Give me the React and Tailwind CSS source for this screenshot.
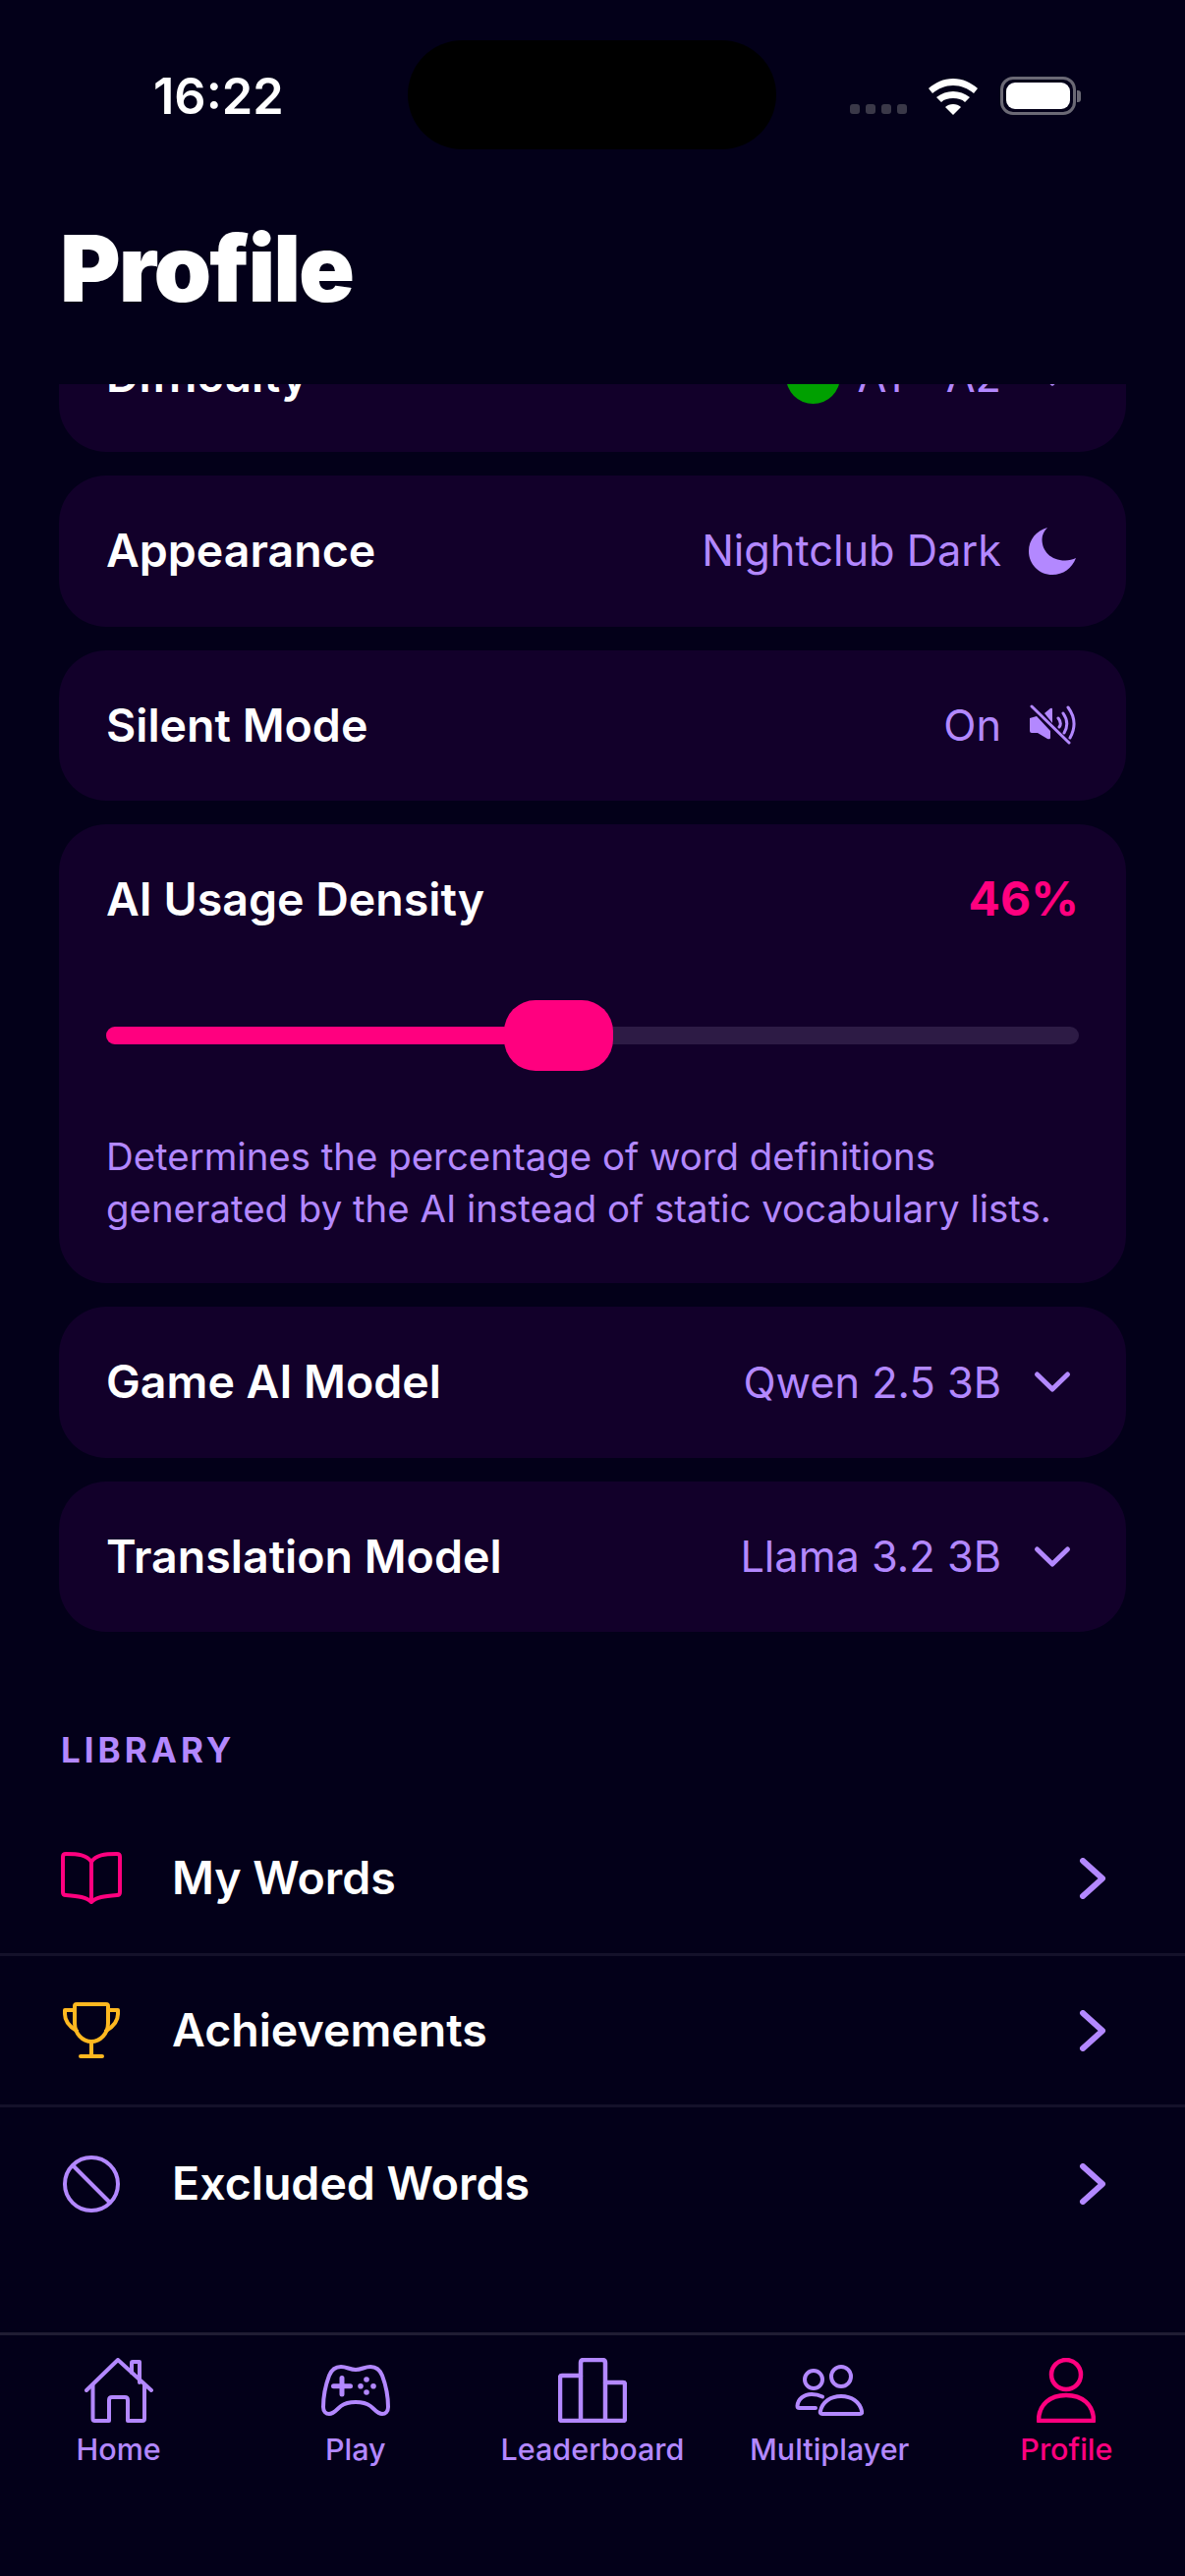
import React from "react";

const sans = "font-['Inter','Noto_Sans',sans-serif]";

const Moon = () => (
  <svg width="48" height="48" viewBox="0 0 48 48" fill="#b388ff">
    <path d="M19 0C7.5 3 0 12.5 0 24c0 13.500 10.500 24 24 24 11 0 20-6.500 24-17-3 1.500-7 2.500-11 2.500C22.500 33.500 13.500 24 13.500 12c0-4.500 2-8.500 5.500-12z" />
  </svg>
);

const SpeakerSlash = () => (
  <svg width="48" height="42" viewBox="0 0 48 42" fill="none" stroke="#b388ff" strokeLinecap="round">
    <path d="M1 14l7-2 14 15v7q0 2-3 1L9 29H3q-2 0-2-2z" fill="#b388ff" stroke="none" />
    <path d="M16 9l6-5q2-1 2 1v14z" fill="#b388ff" stroke="none" />
    <path d="M3 2l38 37" strokeWidth="3" />
    <path d="M30 14q4 5 1 9M35 9q7 10 1 20M40 3q11 15 2 31" strokeWidth="3" />
  </svg>
);

const ChevronDown = () => (
  <svg width="48" height="24" viewBox="0 0 48 24" fill="none" stroke="#b388ff" strokeWidth="5" strokeLinecap="round" strokeLinejoin="round">
    <path d="M8.500 4L24 19 39.500 4" />
  </svg>
);

const ChevronRight = () => (
  <svg width="28" height="42" viewBox="0 0 28 42" fill="none" stroke="#b388ff" strokeWidth="6" strokeLinecap="round" strokeLinejoin="round">
    <path d="M4 3l20 18L4 39" />
  </svg>
);

const BookIcon = () => (
  <svg width="62" height="54" viewBox="0 0 62 54" fill="none" stroke="#ff007f" strokeWidth="4" strokeLinejoin="round">
    <path d="M31 51C26 46 18 45 5 44q-3 0-3-3V5q0-3 3-3c13 0 21 1 26 8 5-7 13-8 26-8q3 0 3 3v36q0 3-3 3c-13 1-21 2-26 7zM31 10v41" />
  </svg>
);

const TrophyIcon = () => (
  <svg width="58" height="58" viewBox="0 0 58 58" fill="none" stroke="#ffb820" strokeWidth="4" strokeLinecap="round" strokeLinejoin="round">
    <path d="M14 2h30q2 0 2 2v17c0 11-8 19-17 19s-17-8-17-19V4q0-2 2-2z" />
    <path d="M12 8H2v4c0 8 5 13 12 17M46 8h10v4c0 8-5 13-12 17M29 40v15M18 55h22" />
  </svg>
);

const BanIcon = () => (
  <svg width="58" height="58" viewBox="0 0 58 58" fill="none" stroke="#b388ff" strokeWidth="4">
    <circle cx="29" cy="29" r="27" />
    <path d="M10 10l38 38" />
  </svg>
);

const HomeIcon = () => (
  <svg width="70" height="66" viewBox="0 0 70 66" fill="none" stroke="#b388ff" strokeWidth="4" strokeLinecap="round" strokeLinejoin="round">
    <path d="M2 33L34 2l34 31" />
    <path d="M8.500 28v34q0 2 2 2H25V43q0-3 3-3h13q3 0 3 3v21h15q2 0 2-2V28" />
    <path d="M48 15V5q0-1 1-1h7v21" />
  </svg>
);

const GameIcon = () => (
  <svg width="70" height="52" viewBox="0 0 70 52" fill="none" stroke="#b388ff" strokeWidth="4" strokeLinecap="round" strokeLinejoin="round">
    <path d="M20 2c6 0 9 3 15 3s9-3 15-3c7 0 10 4 12 9 3 8 6 22 6 32 0 5-3 7-6 7-5 0-8-5-12-8-4-3-9-4-15-4s-11 1-15 4c-4 3-7 8-12 8-3 0-6-2-6-7 0-10 3-24 6-32C10 6 13 2 20 2z" />
    <path d="M21 13.500v16.500M12.500 21.700h17" strokeWidth="5" />
    <circle cx="46" cy="15" r="2.800" fill="#b388ff" stroke="none" />
    <circle cx="46" cy="28" r="2.800" fill="#b388ff" stroke="none" />
    <circle cx="40" cy="21.700" r="2.800" fill="#b388ff" stroke="none" />
    <circle cx="53" cy="21.700" r="2.800" fill="#b388ff" stroke="none" />
  </svg>
);

const BoardIcon = () => (
  <svg width="70" height="66" viewBox="0 0 70 66" fill="none" stroke="#b388ff" strokeWidth="4.500" strokeLinejoin="round">
    <path d="M2 62V20q0-2 2-2h19V5q0-3 3-3h19q3 0 3 3v20h18q2 0 2 2v35q0 2-2 2H4q-2 0-2-2z" />
    <path d="M23 18v46M48 25v39" />
  </svg>
);

const PeopleIcon = () => (
  <svg width="70" height="52" viewBox="0 0 70 52" fill="none" stroke="#b388ff" strokeWidth="4" strokeLinecap="round" strokeLinejoin="round">
    <circle cx="19" cy="15" r="9" />
    <circle cx="47" cy="12" r="10" />
    <path d="M28 32.500C25 31 21 30 17 30 9 30 3 35 2.500 42q0 2 2 2H21" />
    <path d="M28 50q-3 0-2-3c2-9 10-15 21-15s19 6 21 15q1 3-2 3z" />
  </svg>
);

const PersonIcon = () => (
  <svg width="60" height="66" viewBox="0 0 60 66" fill="none" stroke="#ff007f" strokeWidth="4.500" strokeLinejoin="round">
    <circle cx="30" cy="17" r="15" />
    <path d="M2 64c0-17 12-26 28-26s28 9 28 26z" />
  </svg>
);

const tabs = [
  { label: "Home", icon: <HomeIcon /> },
  { label: "Play", icon: <GameIcon /> },
  { label: "Leaderboard", icon: <BoardIcon /> },
  { label: "Multiplayer", icon: <PeopleIcon /> },
  { label: "Profile", icon: <PersonIcon />, active: true },
];

const library = [
  { label: "My Words", icon: <BookIcon /> },
  { label: "Achievements", icon: <TrophyIcon /> },
  { label: "Excluded Words", icon: <BanIcon /> },
];

const SettingRow = ({ label, children }) => (
  <div className="flex h-[153.6px] items-center justify-between rounded-[48px] bg-[#12002a] pl-[48px] pr-[51px]">
    <span className="text-[46.5px] font-semibold text-white">{label}</span>
    <div className="flex items-center gap-[28px] text-[43.3px] text-[#b388ff]">{children}</div>
  </div>
);

export default function App() {
  return (
    <div className={`${sans} relative flex h-[2622px] w-[1206px] flex-col overflow-hidden bg-[#030019]`}>
      {/* dynamic island */}
      <div className="absolute left-[415px] top-[41px] h-[111px] w-[375px] rounded-[56px] bg-black" />

      <div className="flex h-[196px] items-start justify-between pl-[156px] pr-[106px] pt-[70px]">
        <span className="text-[50.5px] font-semibold leading-[56px] text-white">16:22</span>
        <div className="mt-[8px] flex items-end">
          <div className="mb-[1px] flex gap-[6px]">
            <span className="h-[10px] w-[10px] rounded-[3px] bg-[#3a3848]" />
            <span className="h-[10px] w-[10px] rounded-[3px] bg-[#3a3848]" />
            <span className="h-[10px] w-[10px] rounded-[3px] bg-[#3a3848]" />
            <span className="h-[10px] w-[10px] rounded-[3px] bg-[#3a3848]" />
          </div>
          <svg className="ml-[22px]" width="50" height="37" viewBox="0 0 50 37" fill="#fff">
            <path d="M25 0C15 0 7 4 0 10l4 5C10 10 17 7 25 7s15 3 21 8l4-5C43 4 35 0 25 0z" />
            <path d="M25 13c-6 0-12 2-17 6l5 5c3-3 7-4 12-4s9 1 12 4l5-5c-5-4-11-6-17-6z" />
            <path d="M25 26c-3 0-6 1-8 3l8 8 8-8c-2-2-5-3-8-3z" />
          </svg>
          <div className="ml-[23px] flex items-center">
            <div className="flex h-[39px] w-[77px] rounded-[13px] border-[3px] border-[#6b6975] p-[3px]">
              <div className="flex-1 rounded-[9px] bg-white" />
            </div>
            <div className="ml-[1px] h-[12px] w-[4px] rounded-r-[3px] bg-[#6b6975]" />
          </div>
        </div>
      </div>

      <div className="h-[195px] pl-[61px] pt-[22px]">
        <h1 className="text-[94px] font-black leading-[110px] tracking-[-2px] text-white">Profile</h1>
      </div>

      <div className="flex-1 overflow-hidden">
        <div className="-mt-[84.6px] flex flex-col gap-[24px] px-[60px]">
          <SettingRow label="Difficulty">
            <span className="flex items-center gap-[17px]">
              <span className="h-[55px] w-[55px] rounded-full bg-[#00a000]" />
              A1 - A2
            </span>
            <ChevronDown />
          </SettingRow>
          <SettingRow label="Appearance">
            <span>Nightclub Dark</span>
            <Moon />
          </SettingRow>
          <SettingRow label="Silent Mode">
            <span>On</span>
            <SpeakerSlash />
          </SettingRow>

          <div className="h-[467px] rounded-[48px] bg-[#12002a] px-[48px] pt-[48px]">
            <div className="flex items-center justify-between">
              <span className="text-[46.5px] font-semibold leading-[56px] text-white">AI Usage Density</span>
              <span className="text-[48px] font-bold leading-[56px] text-[#ff007f]">46%</span>
            </div>
            <div className="relative mt-[102px] flex h-[18px] overflow-hidden rounded-[9px] bg-[#2d1b45]">
              <div className="h-full w-[440px] bg-[#ff007f]" />
            </div>
            <div className="relative">
              <div className="absolute -top-[45px] left-[405px] h-[72px] w-[111px] rounded-[32px] bg-[#ff007f]" />
            </div>
            <p className="mt-[88px] text-[38.4px] leading-[53px] text-[#b388ff]">
              Determines the percentage of word definitions generated by the AI instead of static vocabulary lists.
            </p>
          </div>

          <SettingRow label="Game AI Model">
            <span>Qwen 2.5 3B</span>
            <ChevronDown />
          </SettingRow>
          <SettingRow label="Translation Model">
            <span>Llama 3.2 3B</span>
            <ChevronDown />
          </SettingRow>

          <h2 className="mt-[76px] pl-[2px] text-[35px] font-bold leading-[40px] tracking-[4px] text-[#b388ff]">LIBRARY</h2>
        </div>

        <div className="mt-[35px] flex flex-col">
          {library.map((item, i) => (
            <div
              key={item.label}
              className={`flex h-[154.5px] items-center pl-[62px] pr-[80px] ${i < 2 ? "border-b-[3px] border-[#14112a]" : ""}`}
            >
              <div className="flex w-[62px] justify-center">{item.icon}</div>
              <span className="ml-[51px] flex-1 text-[46.5px] font-semibold text-white">{item.label}</span>
              <ChevronRight />
            </div>
          ))}
        </div>
      </div>

      <div className="grid h-[248px] grid-cols-5 border-t-[3px] border-[#201d33] pt-[23px]">
        {tabs.map((tab) => (
          <div key={tab.label} className="flex flex-col items-center">
            <div className="flex h-[66px] items-center">{tab.icon}</div>
            <span className={`mt-[7px] text-[30.5px] font-medium leading-[40px] ${tab.active ? "text-[#ff007f]" : "text-[#b388ff]"}`}>
              {tab.label}
            </span>
          </div>
        ))}
      </div>
    </div>
  );
}
